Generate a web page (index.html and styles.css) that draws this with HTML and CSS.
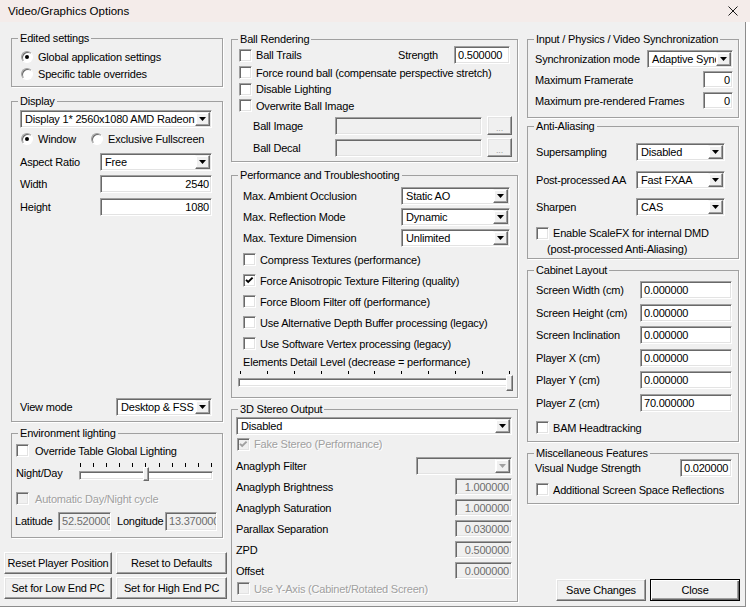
FILE: index.html
```html
<!DOCTYPE html>
<html lang="en">
<head>
    <meta charset="UTF-8">
    <title>Video/Graphics Options</title>
    <link rel="stylesheet" href="styles.css">
</head>
<body>

<div class="titlebar">
    <span>Video/Graphics Options</span>
    <svg class="close-x" width="10" height="10" viewBox="0 0 10 10">
        <path d="M0.5 0.5L9.5 9.5M9.5 0.5L0.5 9.5" stroke="#1a1a1a" stroke-width="1"/>
    </svg>
</div>

<div class="client">

    <!-- left column -->
    <div class="col col-left">
        <fieldset class="group g-edited">
            <legend>Edited settings</legend>
            <div class="gbody">
                <div class="row r17 mt-3"><span class="radio on"></span><span class="opt">Global application settings</span></div>
                <div class="row r17"><span class="radio"></span><span class="opt">Specific table overrides</span></div>
            </div>
        </fieldset>

        <fieldset class="group g-display">
            <legend>Display</legend>
            <div class="gbody">
                <div class="row r18 mt-2">
                    <div class="combo adapter"><span class="val">Display 1* 2560x1080 AMD Radeon RX 6800</span><span class="drop"></span></div>
                </div>
                <div class="row r18 mt-2">
                    <span class="radio on first"></span><span class="opt window-opt">Window</span>
                    <span class="radio"></span><span class="opt">Exclusive Fullscreen</span>
                </div>
                <div class="row r18 mt-5">
                    <span class="lbl">Aspect Ratio</span>
                    <div class="combo"><span class="val">Free</span><span class="drop"></span></div>
                </div>
                <div class="row r18 mt-4">
                    <span class="lbl">Width</span>
                    <div class="edit num">2540</div>
                </div>
                <div class="row r18 mt-5">
                    <span class="lbl">Height</span>
                    <div class="edit num">1080</div>
                </div>
                <div class="row r18 view-row">
                    <span class="lbl view-lbl">View mode</span>
                    <div class="combo view-combo"><span class="val">Desktop &amp; FSS</span><span class="drop"></span></div>
                </div>
            </div>
        </fieldset>

        <fieldset class="group g-env">
            <legend>Environment lighting</legend>
            <div class="gbody">
                <div class="row r17 mt-2"><span class="check"></span><span class="opt wide">Override Table Global Lighting</span></div>
                <div class="row r21 mt-3">
                    <span class="lbl night-lbl">Night/Day</span>
                    <div class="slider night">
                        <div class="ticks"><i></i><i></i><i></i><i></i><i></i><i></i><i></i><i></i><i></i><i></i><i></i></div>
                        <div class="track"></div>
                        <div class="thumb"></div>
                    </div>
                </div>
                <div class="row r17 mt-7"><span class="check off"></span><span class="opt wide dim">Automatic Day/Night cycle</span></div>
                <div class="row r18 mt-5 geo">
                    <span class="lbl lat-lbl">Latitude</span>
                    <div class="edit off lat">52.520000</div>
                    <span class="lbl lon-lbl">Longitude</span>
                    <div class="edit off lon">13.370000</div>
                </div>
            </div>
        </fieldset>

        <div class="btn-grid">
            <button class="btn">Reset Player Position</button>
            <button class="btn">Reset to Defaults</button>
            <button class="btn">Set for Low End PC</button>
            <button class="btn">Set for High End PC</button>
        </div>
    </div>

    <!-- middle column -->
    <div class="col col-mid">
        <fieldset class="group g-ball">
            <legend>Ball Rendering</legend>
            <div class="gbody">
                <div class="row r18">
                    <span class="check"></span><span class="opt grow">Ball Trails</span>
                    <span class="strength-lbl">Strength</span>
                    <div class="edit strength">0.500000</div>
                </div>
                <div class="row r17"><span class="check"></span><span class="opt">Force round ball (compensate perspective stretch)</span></div>
                <div class="row r16"><span class="check"></span><span class="opt">Disable Lighting</span></div>
                <div class="row r17"><span class="check"></span><span class="opt">Overwrite Ball Image</span></div>
                <div class="row r19 mt-2 file-row">
                    <span class="lbl">Ball Image</span>
                    <div class="edit off"></div>
                    <button class="btn browse">...</button>
                </div>
                <div class="row r19 mt-3 file-row">
                    <span class="lbl">Ball Decal</span>
                    <div class="edit off"></div>
                    <button class="btn browse">...</button>
                </div>
            </div>
        </fieldset>

        <fieldset class="group g-perf">
            <legend>Performance and Troubleshooting</legend>
            <div class="gbody">
                <div class="row r18 mt-5">
                    <span class="lbl">Max. Ambient Occlusion</span>
                    <div class="combo"><span class="val">Static AO</span><span class="drop"></span></div>
                </div>
                <div class="row r18 mt-3">
                    <span class="lbl">Max. Reflection Mode</span>
                    <div class="combo"><span class="val">Dynamic</span><span class="drop"></span></div>
                </div>
                <div class="row r18 mt-3">
                    <span class="lbl">Max. Texture Dimension</span>
                    <div class="combo"><span class="val">Unlimited</span><span class="drop"></span></div>
                </div>
                <div class="row r21 mt-2"><span class="check"></span><span class="opt">Compress Textures (performance)</span></div>
                <div class="row r21">
                    <span class="check"><svg viewBox="0 0 9 9"><polyline points="1,3.8 3.2,6 7.6,1.6"/></svg></span>
                    <span class="opt">Force Anisotropic Texture Filtering (quality)</span>
                </div>
                <div class="row r21"><span class="check"></span><span class="opt">Force Bloom Filter off (performance)</span></div>
                <div class="row r21"><span class="check"></span><span class="opt">Use Alternative Depth Buffer processing (legacy)</span></div>
                <div class="row r21"><span class="check"></span><span class="opt">Use Software Vertex processing (legacy)</span></div>
                <div class="row r16">Elements Detail Level (decrease = performance)</div>
                <div class="slider detail">
                    <div class="ticks"><i></i><i></i><i></i><i></i><i></i><i></i><i></i><i></i><i></i><i></i><i></i></div>
                    <div class="track"></div>
                    <div class="thumb"></div>
                </div>
            </div>
        </fieldset>

        <fieldset class="group g-stereo">
            <legend>3D Stereo Output</legend>
            <div class="gbody">
                <div class="row r18 mt-1">
                    <div class="combo stereo-mode"><span class="val">Disabled</span><span class="drop"></span></div>
                </div>
                <div class="row r16 mt-1">
                    <span class="check off first"><svg viewBox="0 0 9 9"><polyline points="1,3.8 3.2,6 7.6,1.6"/></svg></span>
                    <span class="opt dim">Fake Stereo (Performance)</span>
                </div>
                <div class="row r18 mt-5">
                    <span class="lbl filter-lbl">Anaglyph Filter</span>
                    <div class="combo off filter"><span class="val"></span><span class="drop"></span></div>
                </div>
                <div class="row r17 mt-3"><span class="lbl">Anaglyph Brightness</span><div class="edit off num">1.000000</div></div>
                <div class="row r17 mt-4"><span class="lbl">Anaglyph Saturation</span><div class="edit off num">1.000000</div></div>
                <div class="row r17 mt-4"><span class="lbl">Parallax Separation</span><div class="edit off num">0.030000</div></div>
                <div class="row r17 mt-4"><span class="lbl">ZPD</span><div class="edit off num">0.500000</div></div>
                <div class="row r17 mt-4"><span class="lbl">Offset</span><div class="edit off num">0.000000</div></div>
                <div class="row r17 mt-1"><span class="check off first"></span><span class="opt dim">Use Y-Axis (Cabinet/Rotated Screen)</span></div>
            </div>
        </fieldset>
    </div>

    <!-- right column -->
    <div class="col col-right">
        <fieldset class="group g-sync">
            <legend>Input / Physics / Video Synchronization</legend>
            <div class="gbody">
                <div class="row r18 mt-4">
                    <span class="lbl sync-lbl">Synchronization mode</span>
                    <div class="combo"><span class="val">Adaptive Sync</span><span class="drop"></span></div>
                </div>
                <div class="row r17 mt-3">
                    <span class="lbl frame-lbl">Maximum Framerate</span>
                    <div class="edit num">0</div>
                </div>
                <div class="row r17 mt-4">
                    <span class="lbl frame-lbl">Maximum pre-rendered Frames</span>
                    <div class="edit num">0</div>
                </div>
            </div>
        </fieldset>

        <fieldset class="group g-aa">
            <legend>Anti-Aliasing</legend>
            <div class="gbody">
                <div class="row r18 mt-10">
                    <span class="lbl">Supersampling</span>
                    <div class="combo"><span class="val">Disabled</span><span class="drop"></span></div>
                </div>
                <div class="row r18 mt-10">
                    <span class="lbl">Post-processed AA</span>
                    <div class="combo"><span class="val">Fast FXAA</span><span class="drop"></span></div>
                </div>
                <div class="row r18 mt-9">
                    <span class="lbl">Sharpen</span>
                    <div class="combo"><span class="val">CAS</span><span class="drop"></span></div>
                </div>
                <div class="row mt-9 scalefx">
                    <span class="check"></span>
                    <span class="two-line">Enable ScaleFX for internal DMD<br>(post-processed Anti-Aliasing)</span>
                </div>
            </div>
        </fieldset>

        <fieldset class="group g-cab">
            <legend>Cabinet Layout</legend>
            <div class="gbody">
                <div class="row r18 mt-4"><span class="lbl">Screen Width (cm)</span><div class="edit">0.000000</div></div>
                <div class="row r18 mt-5"><span class="lbl">Screen Height (cm)</span><div class="edit">0.000000</div></div>
                <div class="row r18 mt-4"><span class="lbl">Screen Inclination</span><div class="edit">0.000000</div></div>
                <div class="row r18 mt-5"><span class="lbl">Player X (cm)</span><div class="edit">0.000000</div></div>
                <div class="row r18 mt-4"><span class="lbl">Player Y (cm)</span><div class="edit">0.000000</div></div>
                <div class="row r18 mt-5"><span class="lbl">Player Z (cm)</span><div class="edit">70.000000</div></div>
                <div class="row r17 mt-7"><span class="check"></span><span class="opt">BAM Headtracking</span></div>
            </div>
        </fieldset>

        <fieldset class="group g-misc">
            <legend>Miscellaneous Features</legend>
            <div class="gbody">
                <div class="row r18 nudge-row">
                    <span class="lbl">Visual Nudge Strength</span>
                    <div class="edit">0.020000</div>
                </div>
                <div class="row r17 mt-4"><span class="check first"></span><span class="opt">Additional Screen Space Reflections</span></div>
            </div>
        </fieldset>

        <div class="dialog-buttons">
            <button class="btn">Save Changes</button>
            <button class="btn default">Close</button>
        </div>
    </div>

</div>

</body>
</html>
```

FILE: styles.css
```css
* {
    box-sizing: border-box;
}

html, body {
    margin: 0;
}

body {
    background: #fff;
    font: 11px "Liberation Sans", Arial, sans-serif;
    letter-spacing: -0.2px;
    color: #000;
}

/* Window caption */
.titlebar {
    height: 22px;
    background: #f4ecea;
    display: flex;
    align-items: center;
    padding: 0 12px 0 8px;
    font-size: 11.5px;
    letter-spacing: 0;
}

.close-x {
    margin-left: auto;
}

/* Dialog client area, three columns */
.client {
    width: 746px;
    height: 585px;
    background: #f0f0f0;
    border-right: 1px solid #8c8c8c;
    border-bottom: 1px solid #8c8c8c;
    display: flex;
    padding-left: 4px;
}

.col {
    display: flex;
    flex-direction: column;
}

.col-left {
    width: 223px;
    margin-right: 4px;
}

.col-mid {
    width: 287px;
    margin-right: 9px;
}

.col-right {
    width: 213px;
}

.col-left .group {
    margin-left: 7px;
    margin-right: 4px;
}

.col-right .group {
    margin-right: 1px;
}

/* Group boxes */
.group {
    margin: 0;
    padding: 0;
    min-width: 0;
    border: 1px solid #a0a0a0;
    box-shadow: 1px 1px 0 #fff;
}

.group > legend {
    margin-left: 6px;
    padding: 0 2px;
    line-height: 13px;
}

.g-edited  { margin-top: 10px !important; height: 55px; }
.g-display { margin-top: 8px !important;  height: 327px; }
.g-env     { margin-top: 5px !important;  height: 111px; }
.g-ball    { margin-top: 11px !important; height: 129px; }
.g-perf    { margin-top: 7px !important;  height: 229px; }
.g-stereo  { margin-top: 5px !important;  height: 199px; }
.g-sync    { margin-top: 11px !important; height: 85px; }
.g-aa      { margin-top: 2px !important;  height: 139px; }
.g-cab     { margin-top: 5px !important;  height: 178px; }
.g-misc    { margin-top: 5px !important;  height: 57px; }

/* Rows */
.row {
    display: flex;
    align-items: center;
    flex: none;
    white-space: nowrap;
}

.r16 { height: 16px; }
.r17 { height: 17px; }
.r18 { height: 18px; }
.r19 { height: 19px; }
.r21 { height: 21px; }

.mt-1 { margin-top: 1px; }
.mt-2 { margin-top: 2px; }
.mt-3 { margin-top: 3px; }
.mt-4 { margin-top: 4px; }
.mt-5 { margin-top: 5px; }
.mt-7 { margin-top: 7px; }
.mt-9 { margin-top: 9px; }
.mt-10 { margin-top: 10px; }

.lbl {
    flex: none;
}

.opt {
    margin-left: 4px;
}

.opt.wide {
    margin-left: 6px;
}

.grow {
    flex: 1;
}

.dim {
    color: #a0a0a0;
    text-shadow: 1px 1px 0 #fff;
}

/* Sunken edit box */
.edit,
.combo {
    flex: none;
    height: 18px;
    background: #fff;
    border: 1px solid;
    border-color: #a0a0a0 #fff #fff #a0a0a0;
    box-shadow: inset 1px 1px 0 #696969, inset -1px -1px 0 #e3e3e3;
    overflow: hidden;
    white-space: nowrap;
}

.edit {
    display: flex;
    align-items: center;
    padding: 0 2px 0 3px;
}

.r17 .edit {
    height: 17px;
}

.edit.num {
    justify-content: flex-end;
}

.edit.off {
    background: #f0f0f0;
    color: #6d6d6d;
}

/* Drop-down list */
.combo {
    display: flex;
    padding: 1px;
}

.combo .val {
    flex: 1;
    overflow: hidden;
    padding-left: 3px;
    line-height: 15px;
}

.combo .drop {
    flex: none;
    width: 15px;
    background: #f0f0f0;
    border: 1px solid;
    border-color: #f0f0f0 #696969 #696969 #fff;
    box-shadow: inset -1px -1px 0 #a0a0a0, inset 1px 1px 0 #fff;
    display: flex;
    align-items: center;
    justify-content: center;
}

.combo .drop::after {
    content: "";
    width: 7px;
    height: 4px;
    background: #000;
    clip-path: polygon(0 0, 100% 0, 50% 100%);
}

.combo.off {
    background: #f0f0f0;
}

.combo.off .drop::after {
    background: #a0a0a0;
}

/* Check box and radio button */
.check {
    flex: none;
    width: 13px;
    height: 13px;
    background: #fff;
    border: 1px solid;
    border-color: #a0a0a0 #fff #fff #a0a0a0;
    box-shadow: inset 1px 1px 0 #696969, inset -1px -1px 0 #e3e3e3;
    padding: 1px;
}

.check svg {
    display: block;
    width: 9px;
    height: 9px;
    fill: none;
    stroke: #000;
    stroke-width: 1.9;
}

.check.off {
    background: #f0f0f0;
}

.check.off svg {
    stroke: #a0a0a0;
}

.radio {
    flex: none;
    width: 12px;
    height: 12px;
    border-radius: 50%;
    background: #fff;
    border: 1px solid;
    border-color: #a0a0a0 #fff #fff #a0a0a0;
    box-shadow: inset 1px 1px 0 #696969;
    display: flex;
    align-items: center;
    justify-content: center;
}

.radio.on::after {
    content: "";
    width: 4px;
    height: 4px;
    border-radius: 50%;
    background: #000;
}

/* Push buttons */
.btn {
    font: inherit;
    color: #000;
    letter-spacing: inherit;
    height: 22px;
    padding: 0;
    background: #f0f0f0;
    border: 1px solid;
    border-color: #fff #696969 #696969 #fff;
    box-shadow: inset -1px -1px 0 #a0a0a0, inset 1px 1px 0 #e3e3e3;
}

.btn.default {
    border-color: #000;
    box-shadow: inset 1px 1px 0 #fff, inset -1px -1px 0 #696969, inset -2px -2px 0 #a0a0a0;
}

.btn.browse {
    flex: none;
    width: 25px;
    height: 19px;
    margin-left: 5px;
    color: #a0a0a0;
    font-size: 9px;
    line-height: 14px;
    padding-top: 4px;
}

.btn-grid {
    margin-top: 14px;
    display: grid;
    grid-template-columns: 108px 111px;
    grid-template-rows: 22px 22px;
    gap: 3px 4px;
}

.dialog-buttons {
    margin-top: 75px;
    display: flex;
    justify-content: flex-end;
    gap: 4px;
}

.dialog-buttons .btn {
    width: 90px;
    height: 22px;
}

/* Track bars */
.slider {
    position: relative;
    flex: none;
    height: 21px;
}

.ticks {
    display: flex;
    justify-content: space-between;
    height: 4px;
}

.ticks i {
    width: 1px;
    background: #000;
}

.track {
    height: 9px;
    background: #fff;
    border: 1px solid;
    border-color: #a0a0a0 #fff #fff #a0a0a0;
    box-shadow: inset 1px 1px 0 #696969, inset -1px -1px 0 #e3e3e3;
}

.thumb {
    position: absolute;
    width: 7px;
    height: 16px;
    background: #f0f0f0;
    border: 1px solid;
    border-color: #fff #696969 #696969 #fff;
    box-shadow: inset -1px -1px 0 #a0a0a0;
}

.slider.night {
    width: 134px;
}

.slider.night .ticks {
    margin: 1px 1px 0;
}

.slider.night .track {
    margin-top: 4px;
    height: 9px;
}

.slider.night .thumb {
    left: 64px;
    top: 5px;
    width: 6px;
    height: 14px;
}

.slider.detail {
    width: 274px;
    margin-left: -5px;
    margin-top: 1px;
}

.slider.detail .ticks {
    margin: 1px 2px 0;
    height: 3px;
}

.slider.detail .track {
    margin-top: 4px;
}

.slider.detail .thumb {
    left: 268px;
    top: 4px;
}

/* Per-group layout */
.g-edited .gbody {
    padding-left: 9px;
}

.g-edited .opt {
    margin-left: 5px;
}

.g-display .gbody {
    padding-left: 8px;
}

.g-display .adapter {
    width: 192px;
}

.g-display .radio.first {
    margin-left: 1px;
}

.g-display .opt {
    margin-left: 5px;
}

.g-display .window-opt {
    width: 53px;
}

.g-display .lbl {
    width: 80px;
}

.g-display .combo,
.g-display .edit {
    width: 112px;
}

.g-display .combo.adapter {
    width: 192px;
}

.g-display .view-row {
    margin-top: 182px;
}

.g-display .lbl.view-lbl {
    width: 96px;
}

.g-display .combo.view-combo {
    width: 96px;
}

.g-env .gbody {
    padding-left: 4px;
}

.g-env .night-lbl {
    width: 63px;
}

.g-env .geo .lat-lbl {
    margin-left: -1px;
    width: 43px;
}

.g-env .geo .lat {
    width: 53px;
    height: 19px;
}

.g-env .geo .lon-lbl {
    margin-left: 6px;
    width: 48px;
}

.g-env .geo .lon {
    width: 52px;
    height: 19px;
}

.g-ball .gbody {
    padding: 0 7px;
}

.g-ball .strength-lbl {
    width: 56px;
}

.g-ball .strength {
    width: 56px;
    height: 18px;
}

.g-ball .file-row .lbl {
    margin-left: 14px;
    width: 82px;
}

.g-ball .file-row .edit {
    width: 147px;
    height: 18px;
}

.g-perf .gbody {
    padding-left: 11px;
}

.g-perf .lbl {
    width: 158px;
}

.g-perf .combo {
    width: 109px;
}

.g-stereo .gbody {
    padding-left: 4px;
}

.g-stereo .stereo-mode {
    width: 276px;
}

.g-stereo .check.first {
    margin-left: 1px;
}

.g-stereo .lbl {
    width: 219px;
}

.g-stereo .lbl.filter-lbl {
    width: 180px;
}

.g-stereo .combo.filter {
    width: 96px;
}

.g-stereo .edit {
    width: 57px;
}

.g-sync .gbody {
    padding-left: 7px;
}

.g-sync .sync-lbl {
    width: 112px;
}

.g-sync .combo {
    width: 86px;
}

.g-sync .frame-lbl {
    width: 168px;
}

.g-sync .edit {
    width: 30px;
}

.g-aa .gbody {
    padding-left: 8px;
}

.g-aa .lbl {
    width: 100px;
}

.g-aa .combo {
    width: 89px;
}

.g-aa .scalefx {
    align-items: flex-start;
}

.g-aa .scalefx .check {
    margin-top: 2px;
}

.g-aa .two-line {
    margin-left: -2px;
    line-height: 16px;
    text-indent: 6px;
    white-space: normal;
}

.g-cab .gbody {
    padding-left: 8px;
}

.g-cab .lbl {
    width: 104px;
}

.g-cab .edit {
    width: 92px;
}

.g-misc .gbody {
    padding-left: 7px;
}

.g-misc .nudge-row {
    margin-top: -1px;
}

.g-misc .lbl {
    width: 145px;
}

.g-misc .edit {
    width: 52px;
}

.g-misc .check.first {
    margin-left: 1px;
}
```
